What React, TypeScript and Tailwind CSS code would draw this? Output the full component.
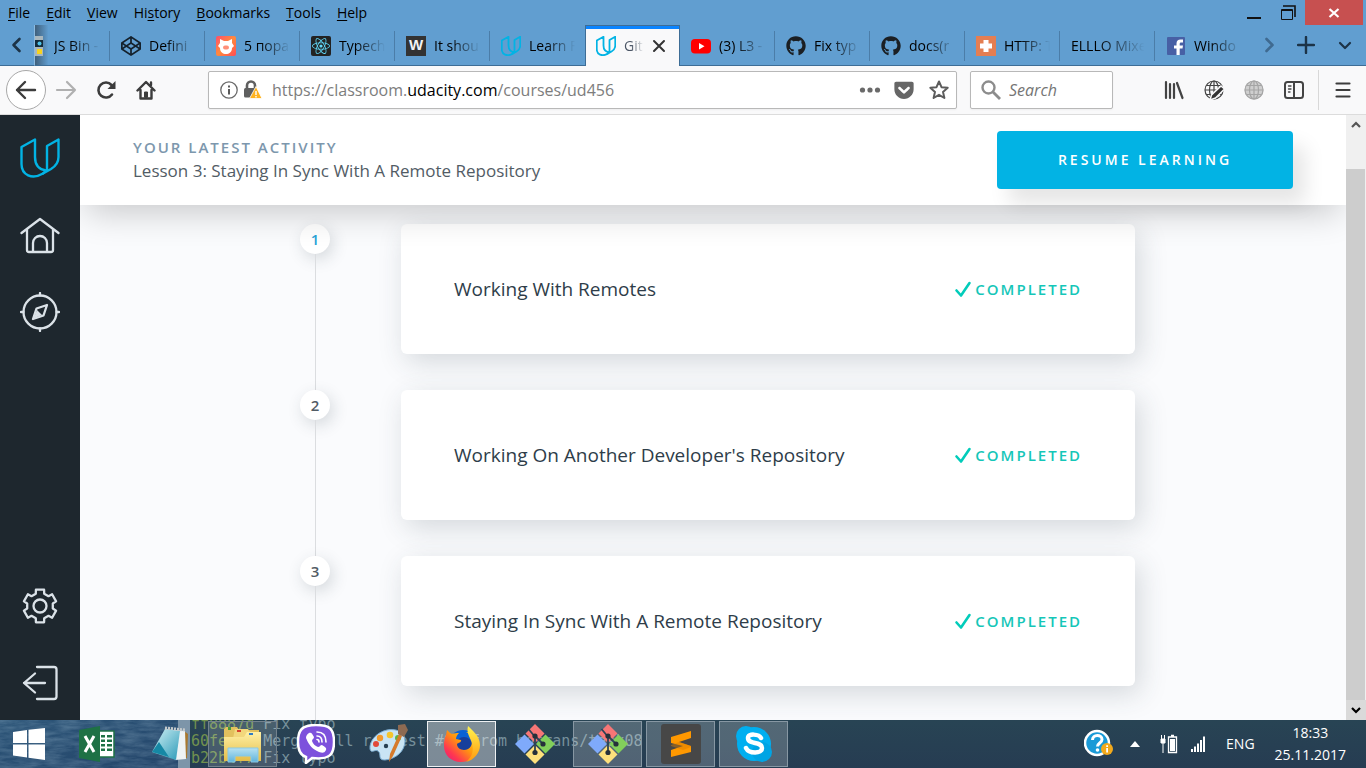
import React from "react";
import { FaCodepen, FaGetPocket, FaGithub, FaReact } from "react-icons/fa";

function UdacityMark({ className, weight }: { className: string; weight: number }) {
  return (
    <svg viewBox="0 0 40 40" className={className} fill="none" stroke="#02b3e4" strokeWidth={weight} strokeLinejoin="round" strokeLinecap="round" aria-hidden="true">
      <path d="M1.500 9L15 1.500V19C15 27 19 31.500 26 32.500L23 35.500C12 42 1.500 37 1.500 26Z" />
      <path d="M27 32V8L38.500 1.500V19C38.500 25 36 28 31 31L23 35.500" />
    </svg>
  );
}

const JsBinIcon = () => (
  <svg viewBox="0 0 20 20" className="size-5" aria-hidden="true">
    <path d="M3 0h14v20H3z" fill="#a9b7bd" />
    <path d="M3 4h14v7H3z" fill="#142b3a" />
    <circle cx="13.500" cy="7.500" r="2" fill="#4fc3e8" />
    <path d="M11 13h5v5h-5z" fill="#f7d31e" />
    <path d="M3 13h6v4H3z" fill="#333" />
  </svg>
);
const PigIcon = () => (
  <svg viewBox="0 0 20 20" className="size-5" aria-hidden="true">
    <defs>
      <linearGradient id="pig" x1="0" y1="0" x2="1" y2="1">
        <stop offset="0" stopColor="#ff4f6d" />
        <stop offset=".5" stopColor="#ff8a3c" />
        <stop offset="1" stopColor="#ff4b55" />
      </linearGradient>
    </defs>
    <rect width="20" height="20" rx="2" fill="url(#pig)" />
    <path d="M4 3l4 2h4l4-2 0 4 2 3-2 2c0 4-3 6-6 6s-6-2-6-6l-2-2 2-3z" fill="#fff" />
    <rect x="7" y="9.500" width="6" height="4" rx="2" fill="#ff8f78" />
  </svg>
);
const ReactTile = () => (
  <span className="flex size-5 items-center justify-center rounded-xs bg-[#222]">
    <FaReact className="size-[18px] text-[#61dafb]" />
  </span>
);
const WTile = () => (
  <span className="flex size-5 items-center justify-center bg-[#333] font-['Liberation_Sans',sans-serif] text-[15px] font-bold text-gray-100">W</span>
);
const YouTubeIcon = () => (
  <svg viewBox="0 0 20 20" className="size-5" aria-hidden="true">
    <rect x="0" y="3" width="20" height="14.500" rx="4" fill="#f00" />
    <path d="M8 7l5.500 3.200L8 13.500z" fill="#fff" />
  </svg>
);
const CrossTile = () => (
  <svg viewBox="0 0 20 20" className="size-5" aria-hidden="true">
    <path d="M0 0h20v20H0z" fill="#e47e52" />
    <path d="M7.500 4h5v3.500H16v5h-3.500V16h-5v-3.500H4v-5h3.500z" fill="#fff" />
  </svg>
);
const FacebookTile = () => (
  <svg viewBox="0 0 20 20" className="size-5" aria-hidden="true">
    <rect x="1" y="1" width="18" height="18" rx="1" fill="#4760a5" />
    <path d="M10.500 19v-6.500H8v-3h2.500V7.500C10.500 5 12 3.500 14.500 3.500H17v3h-1.800c-1.200 0-1.500.6-1.500 1.500v1.500H17l-.5 3h-2.800V19z" fill="#fff" />
  </svg>
);

const Github = () => <FaGithub className="size-5 text-[#1b1f23]" />;
const tabUdacity = <UdacityMark className="size-5" weight={3.6} />;

const tabs: { label: string; icon?: React.ReactNode; active?: boolean }[] = [
  { label: "Defini", icon: <FaCodepen className="size-5 text-[#14212c]" /> },
  { label: "5 пора", icon: <PigIcon /> },
  { label: "Typech", icon: <ReactTile /> },
  { label: "It shou", icon: <WTile /> },
  { label: "Learn F", icon: tabUdacity },
  { label: "Git", icon: tabUdacity, active: true },
  { label: "(3) L3 -", icon: <YouTubeIcon /> },
  { label: "Fix typ", icon: <Github /> },
  { label: "docs(r", icon: <Github /> },
  { label: "HTTP: T", icon: <CrossTile /> },
  { label: "ELLLO Mixe" },
  { label: "Windo", icon: <FacebookTile /> },
];

const fade = "[mask-image:linear-gradient(to_right,black_35%,transparent_98%)]";

function MenuBar() {
  const items = [
    ["", "F", "ile"],
    ["", "E", "dit"],
    ["", "V", "iew"],
    ["Hi", "s", "tory"],
    ["", "B", "ookmarks"],
    ["", "T", "ools"],
    ["", "H", "elp"],
  ];
  return (
    <div className="flex h-[25px] items-start justify-between">
      <div className="flex gap-4 pl-2">
        {items.map(([a, b, c]) => (
          <button key={a + b + c} type="button" className="h-[25px] text-sm leading-[25px]">
            {a}
            <span className="underline underline-offset-2">{b}</span>
            {c}
          </button>
        ))}
      </div>
      <div className="flex items-start">
        <button type="button" aria-label="Minimize" className="flex h-[25px] w-[34px] items-center justify-center">
          <svg viewBox="0 0 16 16" className="size-4" aria-hidden="true"><path d="M1 12h14v2H1z" fill="#111" /></svg>
        </button>
        <button type="button" aria-label="Restore" className="flex h-[25px] w-[34px] items-center justify-center">
          <svg viewBox="0 0 16 16" className="size-4" fill="none" stroke="#111" aria-hidden="true">
            <path d="M3 1h12v11" strokeWidth="1.600" />
            <path d="M1.500 4.500h11v10h-11zM1.500 5.500h11" />
          </svg>
        </button>
        <button type="button" aria-label="Close" className="mr-[3px] flex h-[25px] w-[58px] items-center justify-center bg-[#c75050]">
          <svg viewBox="0 0 12 12" className="size-3" stroke="#fff" strokeWidth="2.200" aria-hidden="true"><path d="M1.500 2l9 8M10.500 2l-9 8" /></svg>
        </button>
      </div>
    </div>
  );
}

function TabStrip() {
  return (
    <div className="flex h-[41px]">
      <button type="button" aria-label="Scroll tabs left" className="flex w-[35px] shrink-0 items-center justify-center border-r border-b border-r-[#8dbbe0] border-b-[#3d6d96]">
        <svg viewBox="0 0 16 16" className="size-4" fill="none" stroke="#1c3347" strokeWidth="2.600" strokeLinecap="round" strokeLinejoin="round" aria-hidden="true"><path d="M10.500 2l-6 6 6 6" /></svg>
      </button>
      <div className="flex min-w-0 flex-1" role="tablist">
        <div role="tab" className="flex min-w-0 shrink grow basis-[75px] items-center justify-end overflow-hidden border-b border-[#3d6d96] bg-linear-to-r from-[#3f5f7b] to-transparent to-18% pt-px">
          <div className="flex w-[95px] shrink-0 items-center gap-2 pl-[11px]">
            <JsBinIcon />
            <span className={`min-w-0 flex-1 overflow-hidden text-sm whitespace-nowrap ${fade}`}>JS Bin -</span>
            <span className="h-[30px] w-px bg-[#4b7da8]" />
          </div>
        </div>
        {tabs.map((t, i) => (
          <div
            key={i}
            role="tab"
            aria-selected={!!t.active}
            className={
              t.active
                ? "flex min-w-0 shrink grow basis-[95px] items-center gap-2 border-x border-t border-[#3d6d96] bg-[#f9f9fa] pl-[10px] shadow-[inset_0_3px_0_#0a84ff]"
                : "flex min-w-0 shrink grow basis-[95px] items-center gap-2 border-b border-[#3d6d96] pt-px pl-[11px]"
            }
          >
            {t.icon && <span className="shrink-0">{t.icon}</span>}
            <span className={`min-w-0 flex-1 overflow-hidden text-sm whitespace-nowrap ${t.active ? "text-gray-600" : ""} ${fade}`}>{t.label}</span>
            {t.active ? (
              <button type="button" aria-label="Close tab" className="mr-[13px] shrink-0">
                <svg viewBox="0 0 14 14" className="size-[14px]" stroke="#333" strokeWidth="2" strokeLinecap="round" aria-hidden="true"><path d="M2 2l10 10M12 2L2 12" /></svg>
              </button>
            ) : (
              <span className={`h-[30px] w-px shrink-0 ${i === 4 || i === 11 ? "" : "bg-[#4b7da8]"}`} />
            )}
          </div>
        ))}
      </div>
      <div className="flex shrink-0 items-center border-b border-[#3d6d96]">
        <button type="button" aria-label="Scroll tabs right" className="flex w-[37px] justify-center">
          <svg viewBox="0 0 16 16" className="size-4" fill="none" stroke="#3f6a90" strokeWidth="2.600" strokeLinecap="round" strokeLinejoin="round" aria-hidden="true"><path d="M5.500 2l6 6-6 6" /></svg>
        </button>
        <button type="button" aria-label="New tab" className="flex w-[37px] justify-center">
          <svg viewBox="0 0 18 18" className="size-[18px]" stroke="#1c3347" strokeWidth="2.400" strokeLinecap="round" aria-hidden="true"><path d="M9 1v16M1 9h16" /></svg>
        </button>
        <button type="button" aria-label="List all tabs" className="flex w-[42px] justify-center">
          <svg viewBox="0 0 14 14" className="size-[14px]" fill="none" stroke="#1c3347" strokeWidth="2.200" strokeLinecap="round" strokeLinejoin="round" aria-hidden="true"><path d="M2 5l5 5 5-5" /></svg>
        </button>
      </div>
    </div>
  );
}

const navButton = "flex w-10 shrink-0 items-center justify-center";

function GlobeLines({ color }: { color: string }) {
  return (
    <g fill="none" stroke={color} strokeWidth="1.200">
      <circle cx="10" cy="10" r="9" />
      <ellipse cx="10" cy="10" rx="4.500" ry="9" />
      <path d="M10 1v18M1 10h18M2.500 5.500h15M2.500 14.500h15" />
    </g>
  );
}

function NavBar() {
  return (
    <div className="flex h-[49px] items-center border-b border-[#dcdcdc] bg-[#f9f9fa] pl-[6px]">
      <button type="button" aria-label="Back" className="flex size-10 shrink-0 items-center justify-center rounded-full border border-[#a8a8a8] bg-white">
        <svg viewBox="0 0 22 20" className="h-5 w-[22px]" fill="none" stroke="#3c3c3c" strokeWidth="2.400" strokeLinecap="round" strokeLinejoin="round" aria-hidden="true"><path d="M20 10H2M10 2l-8 8 8 8" /></svg>
      </button>
      <button type="button" aria-label="Forward" className={navButton}>
        <svg viewBox="0 0 22 20" className="h-5 w-[22px]" fill="none" stroke="#b0b0b0" strokeWidth="2.200" strokeLinecap="round" strokeLinejoin="round" aria-hidden="true"><path d="M2 10h18M12 2l8 8-8 8" /></svg>
      </button>
      <button type="button" aria-label="Reload" className={navButton}>
        <svg viewBox="0 0 20 20" className="size-5" aria-hidden="true">
          <path d="M16 14.500A7.500 7.500 0 1 1 15.500 5" fill="none" stroke="#3c3c3c" strokeWidth="2.600" strokeLinecap="round" />
          <path d="M19.500 1v8h-8z" fill="#3c3c3c" />
        </svg>
      </button>
      <button type="button" aria-label="Home" className={navButton}>
        <svg viewBox="0 0 20 20" className="size-5" fill="none" stroke="#3c3c3c" strokeWidth="2.400" strokeLinecap="round" strokeLinejoin="round" aria-hidden="true">
          <path d="M1.500 10.500L10 2l8.500 8.500M4.500 10v8.500h11V10M15 5V2.500" />
          <path d="M8.500 17v-5h3v5z" fill="#3c3c3c" strokeWidth="1" />
        </svg>
      </button>
      <div className="ml-[42px] flex h-[38px] min-w-0 flex-1 items-center rounded-xs border border-[#b8b8b8] bg-white pl-[11px] shadow-xs">
        <svg viewBox="0 0 18 18" className="size-[18px] shrink-0" aria-hidden="true">
          <circle cx="9" cy="9" r="8.200" fill="none" stroke="#6a6a6a" strokeWidth="1.300" />
          <path d="M8 8h2v5.500H8zM8 4.500h2v2H8z" fill="#5a5a5a" />
        </svg>
        <svg viewBox="0 0 20 20" className="ml-[5px] size-5 shrink-0" aria-hidden="true">
          <path d="M4 9V5.500a4 4 0 0 1 8 0V8" fill="none" stroke="#5f5f5f" strokeWidth="2.600" />
          <rect x="1" y="8" width="12" height="9.500" rx="1.500" fill="#5f5f5f" />
          <path d="M13 6.500l6 12H6.500z" fill="#ffb320" stroke="#fff" strokeWidth=".8" strokeLinejoin="round" />
          <path d="M12.300 11h1.400v4h-1.400zM12.300 16h1.400v1.400h-1.400z" fill="#fff" />
        </svg>
        <div role="textbox" aria-label="Address" tabIndex={0} className="ml-[9px] min-w-0 flex-1 overflow-hidden text-base whitespace-nowrap text-[#7d7d7d]">
          https://classroom.<span className="text-black">udacity.com</span>/courses/ud456
        </div>
        <button type="button" aria-label="Page actions" className="mr-3 shrink-0">
          <svg viewBox="0 0 22 20" className="h-5 w-[22px]" fill="#6a6a6a" aria-hidden="true"><circle cx="3.500" cy="10" r="2.600" /><circle cx="11" cy="10" r="2.600" /><circle cx="18.500" cy="10" r="2.600" /></svg>
        </button>
        <button type="button" aria-label="Save to Pocket" className="mr-[14px] shrink-0"><FaGetPocket className="size-[22px] text-[#666]" /></button>
        <button type="button" aria-label="Bookmark this page" className="mr-[7px] shrink-0">
          <svg viewBox="0 0 20 20" className="size-5" fill="none" stroke="#5c5c5c" strokeWidth="2" strokeLinejoin="round" aria-hidden="true"><path d="M10 1.500l2.500 5.700 6.200.6-4.700 4.100 1.400 6.100-5.400-3.200L4.600 18 6 11.900 1.300 7.800l6.200-.6z" /></svg>
        </button>
      </div>
      <label className="ml-[13px] flex h-[38px] w-[143px] shrink-0 items-center gap-2 rounded-xs border border-[#b8b8b8] bg-white pl-[10px] shadow-xs">
        <svg viewBox="0 0 20 20" className="size-5 shrink-0" fill="none" stroke="#8c8c8c" aria-hidden="true">
          <circle cx="7.500" cy="7.500" r="6" strokeWidth="2.400" />
          <path d="M12 12l7 7" strokeWidth="2.800" />
        </svg>
        <input aria-label="Search" placeholder="Search" className="w-full min-w-0 bg-transparent text-base italic outline-none placeholder:text-[#757575]" />
      </label>
      <div className="ml-[41px] flex h-10 shrink-0 items-center">
        <button type="button" aria-label="Library" className={navButton}>
          <svg viewBox="0 0 20 20" className="size-5" stroke="#444" strokeWidth="2.200" strokeLinecap="round" aria-hidden="true"><path d="M2 2v16M6 4v14M10 4v14" /><path d="M13 3l5.500 15" /></svg>
        </button>
        <button type="button" aria-label="Edit site" className={navButton}>
          <svg viewBox="0 0 20 20" className="size-5" aria-hidden="true">
            <GlobeLines color="#444" />
            <path d="M6 20l1.500-5L17 6l3.500 3L11.500 18z" fill="#333" stroke="#f9f9fa" strokeWidth="1.500" />
          </svg>
        </button>
        <button type="button" aria-label="Translate" className={navButton}>
          <svg viewBox="0 0 20 20" className="size-5" aria-hidden="true"><circle cx="10" cy="10" r="9.500" fill="#cfcfcf" /><GlobeLines color="#a5a5a5" /></svg>
        </button>
        <button type="button" aria-label="Sidebars" className={navButton}>
          <svg viewBox="0 0 20 20" className="size-5" fill="none" stroke="#444" strokeWidth="2" strokeLinecap="round" aria-hidden="true"><rect x="1" y="2" width="18" height="16" rx="2.500" /><path d="M10 2v16" /><path d="M4.500 6H7M4.500 9H7M4.500 12H6" strokeWidth="1.300" /></svg>
        </button>
        <span className="ml-1 h-10 w-px bg-[#d8d8d8]" />
        <button type="button" aria-label="Open menu" className="flex w-[47px] items-center justify-center">
          <svg viewBox="0 0 18 18" className="size-[18px]" stroke="#3c3c3c" strokeWidth="2.200" strokeLinecap="round" aria-hidden="true"><path d="M2.500 2.500h13M2.500 9h13M2.500 15.500h13" /></svg>
        </button>
      </div>
    </div>
  );
}

const gearPath = (() => {
  const pts: string[] = [];
  for (let i = 0; i < 6; i++) {
    const base = i * 60 - 90;
    for (const [deg, r] of [[-19, 13], [-14, 16.8], [14, 16.8], [19, 13]]) {
      const a = ((base + deg) * Math.PI) / 180;
      pts.push(`${(20 + r * Math.cos(a)).toFixed(1)} ${(20 + r * Math.sin(a)).toFixed(1)}`);
    }
  }
  return `M${pts.join("L")}Z`;
})();

function SideIcon({ label, children }: { label: string; children: React.ReactNode }) {
  return (
    <a href="#" aria-label={label}>
      <svg viewBox="0 0 40 40" className="size-10" fill="none" stroke="#dbe2e8" strokeWidth="2.300" strokeLinecap="round" strokeLinejoin="round" aria-hidden="true">
        {children}
      </svg>
    </a>
  );
}

function SideNav() {
  return (
    <nav className="flex w-20 shrink-0 flex-col items-center justify-between bg-[#1e272e] pt-[23px] pb-[17px]">
      <div className="flex flex-col gap-[37px]">
        <a href="#" aria-label="Udacity"><UdacityMark className="size-10" weight={2.4} /></a>
        <SideIcon label="Home"><path d="M1.500 18L20 4l18.500 14M7 14.500V35q0 2 2 2h22q2 0 2-2V14.500M13 37V28a7 7 0 0 1 14 0v9" /></SideIcon>
        <SideIcon label="Catalog">
          <circle cx="20" cy="20" r="16.500" />
          <path d="M20 1v2.500M20 36.500V39M1 20h2.500M36.500 20H39" />
          <path d="M27 13l-10.500 3.500L13 27l10.500-3.500z" />
          <path d="M17 18l5 5-8.500 3.500z" fill="#dbe2e8" stroke="none" />
        </SideIcon>
      </div>
      <div className="flex flex-col gap-[37px]">
        <SideIcon label="Settings"><path d={gearPath} /><circle cx="20" cy="20" r="6.500" /></SideIcon>
        <SideIcon label="Sign out"><path d="M17 4h17q2.500 0 2.500 2.500v27q0 2.500-2.500 2.500H17M25 20H4M15 10.500L4 20l11 9.500" /></SideIcon>
      </div>
    </nav>
  );
}

const lessons = ["Working With Remotes", "Working On Another Developer's Repository", "Staying In Sync With A Remote Repository"];

function Classroom() {
  return (
    <div className="flex min-h-0 flex-1 bg-[#fafbfd]">
      <SideNav />
      <main className="flex min-w-0 flex-1 flex-col overflow-hidden">
        <header className="relative z-10 flex h-[90px] shrink-0 items-center justify-between bg-white px-[53px] shadow-[0_14px_34px_-6px_rgba(0,0,0,0.2)]">
          <div className="pb-[3px]">
            <p className="text-[15px] leading-6 font-semibold tracking-[2px] text-[#7d97ad] uppercase">Your latest activity</p>
            <p className="text-[17px] leading-6 text-[#525c65]">Lesson 3: Staying In Sync With A Remote Repository</p>
          </div>
          <button type="button" className="h-[58px] w-[296px] rounded bg-[#02b3e4] text-sm font-semibold tracking-[3px] text-white uppercase shadow-[12px_15px_20px_rgba(0,0,0,0.1)]">
            Resume learning
          </button>
        </header>
        <ol className="pt-[19px] pr-[211px] pl-[220px]">
          {lessons.map((name, i) => (
            <li key={name} className="flex gap-[71px]">
              <div className="flex w-[30px] shrink-0 flex-col items-center">
                <span className={`flex size-[30px] items-center justify-center rounded-full bg-white text-[15px] font-semibold shadow-[3px_5px_16px_rgba(46,61,73,0.18)] ${i === 0 ? "text-[#2ba4d8]" : "text-[#525c65]"}`}>{i + 1}</span>
                <span className="w-px flex-1 bg-[#dbdde0]" />
              </div>
              <a href="#" className="mb-9 flex h-[130px] min-w-0 flex-1 items-center justify-between rounded-md bg-white px-[53px] shadow-[5px_8px_28px_rgba(46,61,73,0.18)]">
                <span className="text-[19px] text-[#2e3d49]">{name}</span>
                <span className="flex items-center gap-[3px] text-[15px] font-semibold tracking-[2px] text-[#15c6b8] uppercase">
                  <svg viewBox="0 0 18 18" className="size-[18px]" fill="none" stroke="#02ccba" strokeWidth="2.600" strokeLinecap="round" strokeLinejoin="round" aria-hidden="true"><path d="M2.500 10.500l4.500 5L15.500 3" /></svg>
                  Completed
                </span>
              </a>
            </li>
          ))}
        </ol>
      </main>
      <div className="flex w-5 shrink-0 flex-col bg-[#f0f0f0]" aria-hidden="true">
        <div className="flex h-5 items-center justify-center">
          <svg viewBox="0 0 12 12" className="size-3" fill="none" stroke="#555" strokeWidth="2.200"><path d="M2 8l4-4 4 4" /></svg>
        </div>
        <div className="mt-[34px] mr-px flex-1 bg-[#cdcdcd]" />
        <div className="flex h-5 items-center justify-center bg-[#dadada]">
          <svg viewBox="0 0 12 12" className="size-3" fill="none" stroke="#000" strokeWidth="2.200"><path d="M2 4l4 4 4-4" /></svg>
        </div>
      </div>
    </div>
  );
}

const ExcelIcon = () => (
  <svg viewBox="0 0 36 36" className="size-9" aria-hidden="true">
    <path d="M19 5h16v26H19z" fill="#fff" stroke="#1e7145" strokeWidth="1.500" />
    <path d="M22 9h4v2.500h-4zM28 9h5v2.500h-5zM22 13.500h4V16h-4zM28 13.500h5V16h-5zM22 18h4v2.500h-4zM28 18h5v2.500h-5zM22 22.500h4V25h-4zM28 22.500h5V25h-5z" fill="#1e7145" />
    <path d="M0 4l21-4v36L0 32z" fill="#1e7145" />
    <path d="M6 10l9 16M15 10L6 26" stroke="#fff" strokeWidth="3" />
  </svg>
);
const NotepadIcon = () => (
  <svg viewBox="0 0 38 38" className="size-[38px]" aria-hidden="true">
    <defs><linearGradient id="pad" x1="0" y1="0" x2="1" y2="1"><stop offset="0" stopColor="#d5f3f6" /><stop offset="1" stopColor="#2b9ab8" /></linearGradient></defs>
    <path d="M33 6l4 3-1 24-5 1z" fill="#a8782e" />
    <path d="M14 4l20 2 1 28-11 1z" fill="#eef3f4" />
    <path d="M14 4l15 2-4 29L1 27z" fill="url(#pad)" />
    <path d="M8 17l10 15L1 27z" fill="#1688a5" />
    <path d="M14 3l20 2" stroke="#c5cacc" strokeWidth="3" strokeDasharray="2 1" />
  </svg>
);
const ExplorerIcon = () => (
  <svg viewBox="0 0 40 38" className="h-[38px] w-10" aria-hidden="true">
    <defs>
      <linearGradient id="folder" x1="0" y1="0" x2="0" y2="1"><stop offset="0" stopColor="#fff0a5" /><stop offset="1" stopColor="#e4bd49" /></linearGradient>
      <linearGradient id="tray" x1="0" y1="0" x2="0" y2="1"><stop offset="0" stopColor="#b8e2f1" /><stop offset="1" stopColor="#5eb3dc" /></linearGradient>
    </defs>
    <path d="M3 2h11l2 3h20v28H1V4z" fill="#e2c15e" />
    <path d="M5 2h3v3H5z" fill="#4a9c39" />
    <path d="M12 4h13l2 3h9v25H6z" fill="#f2d77c" />
    <path d="M14 5h4v2h-4z" fill="#d8432e" />
    <path d="M1 12h20l3-5h14v29H1z" fill="url(#folder)" />
    <path d="M26 8h4v2h-4z" fill="#2f7bc3" />
    <path d="M5 23h30v14h-7v-6H12v6H5z" fill="url(#tray)" stroke="#89c9e5" />
  </svg>
);
const ViberIcon = () => (
  <svg viewBox="0 0 38 40" className="h-10 w-[38px]" aria-hidden="true">
    <path d="M19 1C5 1 1 6 1 18c0 8 2 13 8 15v6l6-5C32 36 37 31 37 18S33 1 19 1z" fill="#7d51dc" stroke="#fff" strokeWidth="2.500" />
    <path d="M12 9c2-1 3 0 5 4 0 2-2 2-2 4 1 3 3 5 6 6 2 0 2-2 4-2 3 2 5 3 4 5-2 4-5 3-9 1-6-3-9-8-11-13 0-2 1-4 3-5z" fill="#fff" />
    <path d="M20 8c6 0 9 4 9 10M20 12c4 0 5 2 5 6M20 15.500c1.500 0 2 1 2 2.500" fill="none" stroke="#fff" strokeWidth="1.600" strokeLinecap="round" />
  </svg>
);
const PaintIcon = () => (
  <svg viewBox="0 0 40 40" className="size-10" aria-hidden="true">
    <path d="M18 6C8 8 0 17 1 25c1 5 5 0 8 2 4 3-1 9 7 9 11-1 20-9 20-19C36 9 29 4 18 6z" fill="#c9e4f4" stroke="#78a9ce" />
    <circle cx="11" cy="14" r="3.200" fill="#f29a2e" /><circle cx="21" cy="11" r="3.300" fill="#f5c52c" />
    <circle cx="7" cy="20" r="3" fill="#e24a3b" /><circle cx="29" cy="14" r="3" fill="#5bb544" />
    <circle cx="17" cy="22" r="2.200" fill="#284052" />
    <path d="M33 12L24 32l-4 6 1-8 9-20z" fill="#d67a2b" />
    <path d="M29 1l7-1 3 6-4 7-6-3z" fill="#8d6a52" />
  </svg>
);
const FirefoxIcon = () => (
  <svg viewBox="0 0 38 38" className="size-[38px]" aria-hidden="true">
    <defs>
      <linearGradient id="fx" x1="1" y1="0" x2="0" y2="1"><stop offset="0" stopColor="#ffe226" /><stop offset=".45" stopColor="#ff980e" /><stop offset=".75" stopColor="#ff3750" /><stop offset="1" stopColor="#e31587" /></linearGradient>
      <linearGradient id="fxTail" x1="0" y1="0" x2="0" y2="1"><stop offset="0" stopColor="#fff44f" /><stop offset="1" stopColor="#ff980e" /></linearGradient>
    </defs>
    <circle cx="20" cy="19" r="14" fill="#0a62d6" />
    <circle cx="21" cy="20" r="8" fill="#173f9c" />
    <path d="M4 5c2 2 3 3 5 4 2-1 5-1 7-1-2 2-3 4-3 6l5 1c1 2-3 3-4 4 0 7 11 8 14 2 3-6 0-12-5-14 8 0 12 6 12 13 0 10-7 17-17 17S1 30 1 21c0-6 1-9 2-11z" fill="url(#fx)" />
    <path d="M25 1c4 4 12 10 12 19 0 8-6 15-14 17 6-5 8-11 6-18-1-6-6-10-4-18z" fill="url(#fxTail)" />
  </svg>
);
const GitIcon = () => (
  <svg viewBox="0 0 40 40" className="size-10" aria-hidden="true">
    <path d="M20 0l9.500 9.500-9.500 9.500-9.500-9.500z" fill="#f77676" /><path d="M30.500 10.500L40 20l-9.500 9.500L21 20z" fill="#82cf5b" />
    <path d="M20 21l9.500 9.500L20 40l-9.500-9.500z" fill="#fde07c" /><path d="M9.500 10.500L19 20l-9.500 9.500L0 20z" fill="#7faafb" />
    <path d="M13.500 5l5 6M20 12v16M20 12l8 8" fill="none" stroke="#2c4356" strokeWidth="1.800" />
    <circle cx="20" cy="12" r="2.600" fill="#26303a" /><circle cx="28" cy="20" r="2.600" fill="#26303a" /><circle cx="20" cy="28.500" r="2.600" fill="#26303a" />
  </svg>
);
const SublimeIcon = () => (
  <svg viewBox="0 0 40 40" className="size-10" aria-hidden="true">
    <rect width="40" height="40" rx="3" fill="#474747" />
    <path d="M10 13l20-6v7l-12 4 12 4v6l-20 5v-7l12-4-12-3z" fill="#ff9800" />
    <path d="M18 18l12 4v1l-8 3-12-4v-1z" fill="#d97c00" opacity=".45" />
  </svg>
);
const SkypeIcon = () => (
  <svg viewBox="0 0 38 38" className="size-[38px]" aria-hidden="true">
    <circle cx="19" cy="19" r="17" fill="#00aff0" /><circle cx="11" cy="11" r="10" fill="#00aff0" /><circle cx="27" cy="27" r="10" fill="#00a4e4" />
    <path d="M26 13c-2-4-13-5-13 0 0 7 14 3 14 10 0 6-13 6-16 0" fill="none" stroke="#fff" strokeWidth="4.500" strokeLinecap="round" />
  </svg>
);

const apps: { label: string; icon: React.ReactNode; frame?: string }[] = [
  { label: "Excel", icon: <ExcelIcon /> },
  { label: "Notepad", icon: <NotepadIcon /> },
  { label: "File Explorer", icon: <ExplorerIcon />, frame: "border-[#74828d] bg-white/15" },
  { label: "Viber", icon: <ViberIcon /> },
  { label: "Paint", icon: <PaintIcon /> },
  { label: "Firefox", icon: <FirefoxIcon />, frame: "border-[#eef1f3] bg-white/40" },
  { label: "Git Bash", icon: <GitIcon /> },
  { label: "Git GUI", icon: <GitIcon />, frame: "border-[#8797a3] bg-white/20" },
  { label: "Sublime Text", icon: <SublimeIcon />, frame: "border-[#8797a3] bg-white/20" },
  { label: "Skype", icon: <SkypeIcon />, frame: "border-[#8797a3] bg-white/20" },
];

const log: [string, string][] = [
  ["ff8887d", "Fix typo"],
  ["60fe771", "Merge pull request #60 from hotrans/task08"],
  ["b22b4f7", "Fix typo"],
];

function Taskbar() {
  return (
    <footer className="relative flex h-12 shrink-0 items-center justify-between overflow-hidden bg-linear-to-b from-[#284454] to-[#263c52] text-white">
      <div className="absolute inset-0 flex" aria-hidden="true">
        <svg viewBox="0 0 178 48" className="h-12 w-[178px] shrink-0">
          <defs>
            <linearGradient id="sea" x1="0" y1="0" x2="1" y2="1"><stop offset="0" stopColor="#2c5578" /><stop offset="1" stopColor="#24456a" /></linearGradient>
            <filter id="waves" x="0" y="0" width="100%" height="100%">
              <feTurbulence type="fractalNoise" baseFrequency="0.05 0.22" numOctaves="4" seed="4" />
              <feColorMatrix values="0 0 0 0 .45  0 0 0 0 .62  0 0 0 0 .74  .9 .4 0 0 -.42" />
            </filter>
          </defs>
          <path d="M0 0h178v48H0z" fill="url(#sea)" />
          <rect width="178" height="48" filter="url(#waves)" opacity=".45" />
        </svg>
        <div className="w-3 shrink-0 bg-[#7d95a9]" />
        <div className="-mt-1 pl-px font-['DejaVu_Sans_Mono',monospace] text-[15px] leading-[17px] whitespace-pre text-[#76909b]">
          {log.map(([hash, msg]) => (
            <div key={hash}><span className="text-[#71914f]">{hash}</span> {msg}</div>
          ))}
        </div>
      </div>
      <div className="relative flex gap-1">
        <button type="button" aria-label="Start" className="flex h-[46px] w-[58px] items-center justify-center">
          <svg viewBox="0 0 32 32" className="size-8" fill="#fff" aria-hidden="true"><path d="M0 4l14-2v13H0zM15.500 1.800L32 0v15H15.500zM0 16.500h14v13L0 27.500zM15.500 16.500H32V32l-16.500-2.200z" /></svg>
        </button>
        {apps.map((a) => (
          <button key={a.label} type="button" aria-label={a.label} className={`flex h-[46px] w-[69px] items-center justify-center border ${a.frame ?? "border-transparent"}`}>
            {a.icon}
          </button>
        ))}
      </div>
      <div className="relative flex items-center pr-5 text-sm">
        <svg viewBox="0 0 30 30" className="size-[30px]" aria-hidden="true">
          <circle cx="13" cy="14" r="12" fill="#1a9ad7" stroke="#fff" strokeWidth="2.500" />
          <path d="M8.500 11c0-6 9.500-6 9.500-.5 0 3.500-4.500 3.500-4.500 7" fill="none" stroke="#fff" strokeWidth="3" /><circle cx="13.500" cy="21" r="1.800" fill="#fff" />
          <circle cx="23" cy="20" r="6" fill="#f2a91c" /><path d="M22.200 19h1.800v4.500h-1.800zM22.200 16.300h1.800V18h-1.800z" fill="#fff" />
        </svg>
        <svg viewBox="0 0 10 6" className="ml-4 h-[6px] w-[10px]" aria-hidden="true"><path d="M5 0l5 6H0z" fill="#fff" /></svg>
        <svg viewBox="0 0 18 20" className="ml-5 h-5 w-[18px]" fill="none" stroke="#fff" aria-hidden="true">
          <path d="M8.500 3h8v15.500h-8zM11 1.500h3" strokeWidth="1.300" /><path d="M10 5h5v12h-5z" fill="#fff" stroke="none" />
          <path d="M1 5h4v4H1z" fill="#fff" /><path d="M1.500 1v4M4.500 1v4M3 9v10" />
        </svg>
        <svg viewBox="0 0 16 18" className="ml-3 h-[18px] w-4" fill="#fff" aria-hidden="true"><path d="M1 14h2v3H1zM4 11.500h2V17H4zM7 8.500h2V17H7zM10 5h2v12h-2zM13 1.500h2V17h-2z" /></svg>
        <span className="ml-5">ENG</span>
        <time className="ml-5 text-center leading-[22px]">18:33<br />25.11.2017</time>
      </div>
    </footer>
  );
}

export default function App() {
  return (
    <div className="flex h-screen flex-col overflow-hidden font-['Open_Sans','Noto_Sans',sans-serif] text-black">
      <div className="shrink-0 bg-[#619ed0]">
        <MenuBar />
        <TabStrip />
        <NavBar />
      </div>
      <Classroom />
      <Taskbar />
    </div>
  );
}
